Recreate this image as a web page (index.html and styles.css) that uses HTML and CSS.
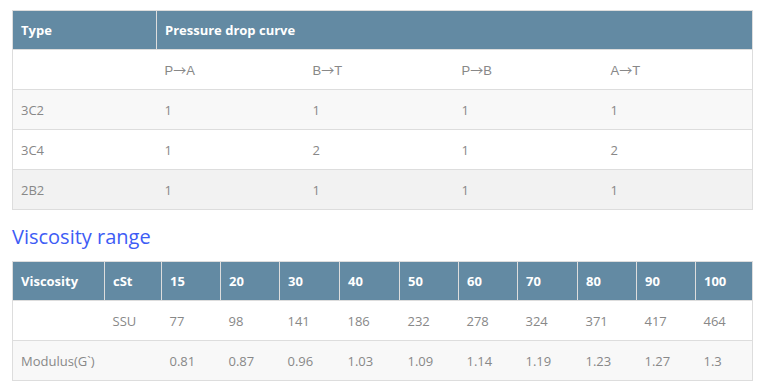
FILE: index.html
```html
<!DOCTYPE html>
<html>
<head>
<meta charset="utf-8">
<link rel="stylesheet" href="styles.css">
</head>
<body>
<div class="page">
  <table class="spec t1">
    <colgroup><col class="c-type"><col class="c-a"><col class="c-b"><col class="c-b"><col class="c-last"></colgroup>
    <thead>
      <tr><th>Type</th><th colspan="4">Pressure drop curve</th></tr>
    </thead>
    <tbody>
      <tr class="white"><td></td><td class="arrow">P<span class="ar">→</span>A</td><td class="arrow">B<span class="ar">→</span>T</td><td class="arrow">P<span class="ar">→</span>B</td><td class="arrow">A<span class="ar">→</span>T</td></tr>
      <tr class="light"><td>3C2</td><td>1</td><td>1</td><td>1</td><td>1</td></tr>
      <tr class="white"><td>3C4</td><td>1</td><td>2</td><td>1</td><td>2</td></tr>
      <tr class="dark"><td>2B2</td><td>1</td><td>1</td><td>1</td><td>1</td></tr>
    </tbody>
  </table>
  <h2 class="title">Viscosity range</h2>
  <table class="spec t2">
    <colgroup>
      <col style="width:92px"><col style="width:57px"><col style="width:59px"><col style="width:59px"><col style="width:60px"><col style="width:60px"><col style="width:59px"><col style="width:59px"><col style="width:60px"><col style="width:59px"><col style="width:59px"><col style="width:57px">
    </colgroup>
    <thead>
      <tr><th>Viscosity</th><th>cSt</th><th>15</th><th>20</th><th>30</th><th>40</th><th>50</th><th>60</th><th>70</th><th>80</th><th>90</th><th>100</th></tr>
    </thead>
    <tbody>
      <tr class="white"><td></td><td>SSU</td><td>77</td><td>98</td><td>141</td><td>186</td><td>232</td><td>278</td><td>324</td><td>371</td><td>417</td><td>464</td></tr>
      <tr class="light"><td>Modulus(G`)</td><td></td><td>0.81</td><td>0.87</td><td>0.96</td><td>1.03</td><td>1.09</td><td>1.14</td><td>1.19</td><td>1.23</td><td>1.27</td><td>1.3</td></tr>
    </tbody>
  </table>
</div>
</body>
</html>
```
FILE: styles.css
```css
html, body {
  margin: 0;
  padding: 0;
  background: #fff;
}
.page {
  padding: 10px 7px 0 12px;
  font-family: "Open Sans", "Liberation Sans", sans-serif;
  font-size: 13px;
  color: #888;
}
.spec {
  width: 740px;
  border-collapse: collapse;
  table-layout: fixed;
  border: 1px solid #ddd;
}
.t1 .c-type { width: 144px; }
.t1 .c-a { width: 148px; }
.t1 .c-b { width: 149px; }
.t1 .c-last { width: 150px; }
.spec th {
  background: #638aa3;
  color: #fff;
  font-weight: 700;
  text-align: left;
  height: 39px;
  padding: 0 8px;
  border: 1px solid #ddd;
  border-top: 0;
  box-sizing: border-box;
}
.spec td {
  height: 40px;
  padding: 0 8px;
  border-top: 1px solid #ddd;
  box-sizing: border-box;
  text-align: left;
}
.spec td.arrow {
  font-family: "Liberation Sans", Arial, sans-serif;
}
.ar { font-family: "Noto Sans CJK SC", sans-serif; }
.spec tr.white td { background: #fff; }
.spec tr.light td { background: #f8f8f8; }
.spec tr.dark td { background: #f2f2f2; }
.title {
  margin: 13px 0 10px 0;
  font-size: 20px;
  font-weight: 400;
  line-height: 28px;
  color: #3d5cf5;
}
```
